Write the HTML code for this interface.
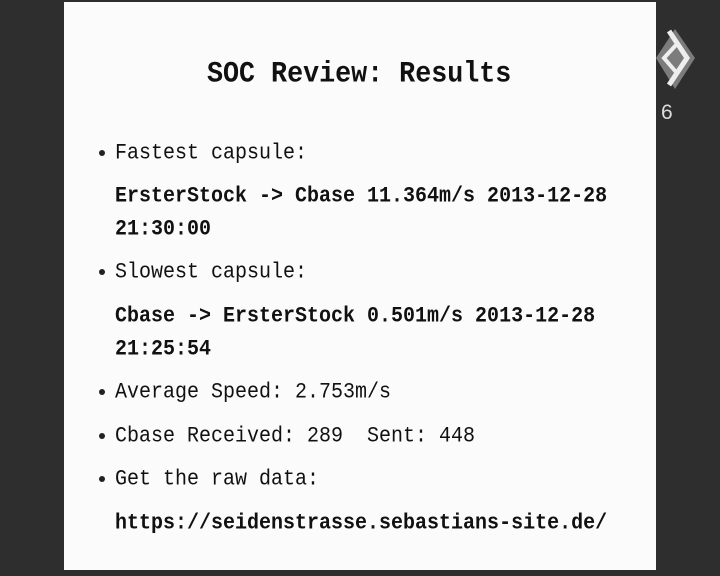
<!DOCTYPE html>
<html><head><style>
body{margin:0;width:720px;height:576px;background:#2e2e2e;position:relative;overflow:hidden;font-family:"Liberation Mono","DejaVu Sans Mono",monospace;}
.slide{position:absolute;left:64px;top:2px;width:592px;height:568px;background:#fbfbfb;}
.t{position:absolute;white-space:pre;color:#111;font-size:20px;line-height:20px;transform:scaleY(1.12);transform-origin:left top;}
.b{font-weight:bold;}
.dot{position:absolute;width:6px;height:6px;border-radius:3px;background:#222;}
</style></head><body>
<div class="slide"></div>
<div class="t b" style="left:207px;top:59px;font-size:26.7px;line-height:28px;">SOC Review: Results</div>
<div class="dot" style="left:99px;top:150px"></div>
<div class="t" style="left:115px;top:143px">Fastest capsule:</div>
<div class="t b" style="left:115px;top:186px">ErsterStock -&gt; Cbase 11.364m/s 2013-12-28</div>
<div class="t b" style="left:115px;top:219px">21:30:00</div>
<div class="dot" style="left:99px;top:269px"></div>
<div class="t" style="left:115px;top:262px">Slowest capsule:</div>
<div class="t b" style="left:115px;top:306px">Cbase -&gt; ErsterStock 0.501m/s 2013-12-28</div>
<div class="t b" style="left:115px;top:339px">21:25:54</div>
<div class="dot" style="left:99px;top:389px"></div>
<div class="t" style="left:115px;top:382px">Average Speed: 2.753m/s</div>
<div class="dot" style="left:99px;top:433px"></div>
<div class="t" style="left:115px;top:426px">Cbase Received: 289  Sent: 448</div>
<div class="dot" style="left:99px;top:476px"></div>
<div class="t" style="left:115px;top:469px">Get the raw data:</div>
<div class="t b" style="left:115px;top:513px">https://seidenstrasse.sebastians-site.de/</div>
<svg style="position:absolute;left:656px;top:28px" width="40" height="64" viewBox="0 0 40 64">
<polygon points="19,1 39,30 19,61 0,30" fill="#7c7c7c"/>
<polyline points="13,3 31,30 13,57" fill="none" stroke="#eee" stroke-width="5"/>
<polyline points="20,17 8,30 20,44" fill="none" stroke="#eee" stroke-width="4"/>
</svg>
<div style="position:absolute;left:661px;top:101px;color:#ddd;font-family:'Liberation Sans',sans-serif;font-size:21px;">6</div>
</body></html>
